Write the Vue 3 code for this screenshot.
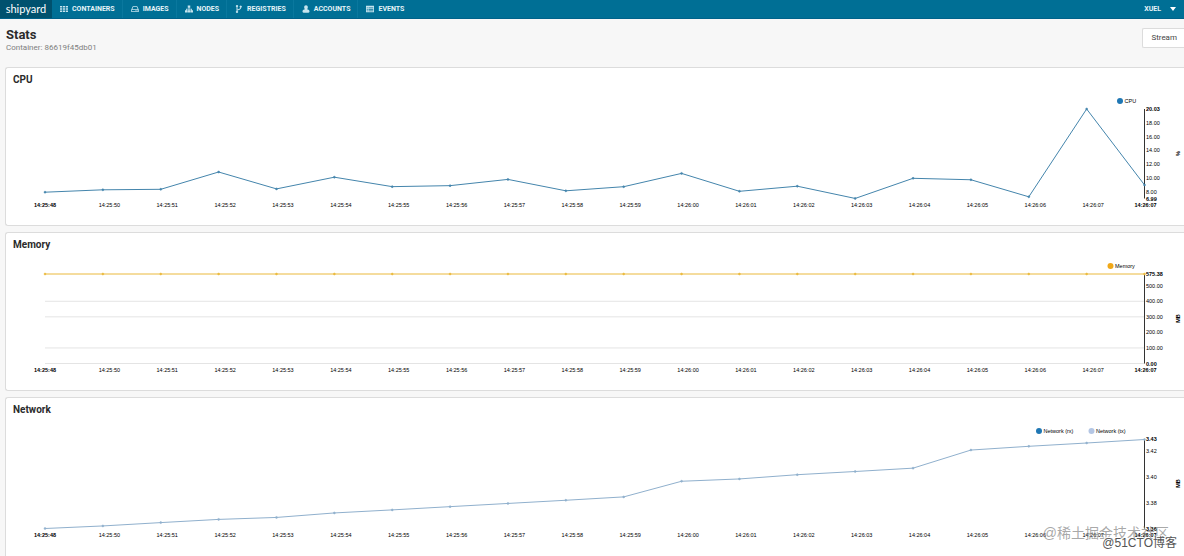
<script setup>
const STEP = 115.74
const LEFT = 78
const RIGHT = 2277
const TOP = 34
const BOTTOM = 213

const nav = [
  { label: 'Containers', icon: 'grid' },
  { label: 'Images', icon: 'disk' },
  { label: 'Nodes', icon: 'tree' },
  { label: 'Registries', icon: 'fork' },
  { label: 'Accounts', icon: 'user' },
  { label: 'Events', icon: 'list' },
]

const times = []
for (let s = 50; s <= 67; s++) {
  times.push(s < 60 ? `14:25:${s}` : `14:26:0${s - 60}`)
}

const charts = [
  {
    title: 'CPU',
    unit: '%',
    min: 6.99,
    max: 20.03,
    ticks: [18, 16, 14, 12, 10, 8],
    grid: [],
    legend: [{ label: 'CPU', color: '#1f77b4', x: 2228 }],
    series: [
      {
        color: '#4485ac',
        values: [7.91, 8.26, 8.33, 10.85, 8.39, 10.09, 8.72, 8.86, 9.77, 8.11, 8.71, 10.65, 8.04, 8.78, 7.0, 9.93, 9.72, 7.24, 20.03, 8.96],
      },
    ],
  },
  {
    title: 'Memory',
    unit: 'MB',
    min: 0,
    max: 575.38,
    ticks: [500, 400, 300, 200, 100],
    grid: [400, 300, 100, 0],
    legend: [{ label: 'Memory', color: '#f0a818', x: 2209 }],
    series: [{ color: '#eab93c', values: Array(20).fill(575.3) }],
  },
  {
    title: 'Network',
    unit: 'MB',
    min: 3.3598,
    max: 3.4295,
    ticks: [3.42, 3.4, 3.38],
    grid: [],
    legend: [
      { label: 'Network (rx)', color: '#1f77b4', x: 2066 },
      { label: 'Network (tx)', color: '#b4c6e4', x: 2171 },
    ],
    series: [
      {
        color: '#90b0cd',
        values: [3.3598, 3.3618, 3.3644, 3.3669, 3.3684, 3.3719, 3.3743, 3.3768, 3.3793, 3.3818, 3.3844, 3.3966, 3.3984, 3.4017, 3.4042, 3.4068, 3.4209, 3.4238, 3.4264, 3.4291],
      },
    ],
  },
]

const px = (i) => LEFT + i * STEP
const py = (c, v) => BOTTOM - ((v - c.min) / (c.max - c.min)) * (BOTTOM - TOP)
const line = (c, s) => s.values.map((v, i) => `${px(i).toFixed(1)},${py(c, v).toFixed(1)}`).join(' ')
</script>

<template>
  <div class="page">
    <header class="bar">
      <a href="#" class="brand" aria-label="shipyard"><span>shipyard</span></a>
      <nav class="menu">
        <a v-for="n in nav" :key="n.label" href="#" class="item">
          <svg class="icon" viewBox="0 0 16 16" aria-hidden="true">
            <path v-if="n.icon === 'grid'" d="M0 2h4.4v3.2H0zM5.8 2h4.4v3.2H5.8zM11.6 2H16v3.2h-4.4zM0 6.4h4.4v3.2H0zM5.8 6.4h4.4v3.2H5.8zM11.6 6.4H16v3.2h-4.4zM0 10.8h4.4V14H0zM5.8 10.8h4.4V14H5.8zM11.6 10.8H16V14h-4.4z" />
            <path v-else-if="n.icon === 'disk'" fill-rule="evenodd" d="M3.6 2.5h8.8L15.5 9v5H.5V9zM4.6 4.1L2.6 8.4h10.8l-2-4.3zM2 9.9v2.6h12V9.9zM9 10.6h1.5v1.2H9zM11.5 10.6H13v1.2h-1.5z" />
            <path v-else-if="n.icon === 'tree'" d="M5.500 1h5v4.500H8.800v1.800H14v3h2V15h-5v-4.700h1.500V8.800H8.800v1.500h1.700V15h-5v-4.700h1.700V8.800H3.500v1.500H5V15H0v-4.700h2v-3h5.200V5.500H5.500z" />
            <path v-else-if="n.icon === 'fork'" fill-rule="evenodd" d="M4 0a2.200 2.200 0 0 1 1 4.200v4.600l3.500-1.300c1.500-.6 1.900-1.300 2-2.300a2.200 2.200 0 1 1 1.900 0c-.1 2-1 3.300-3.200 4.100L5 10.900v.9A2.200 2.200 0 1 1 3 11.800V4.200A2.200 2.200 0 0 1 4 0z" />
            <path v-else-if="n.icon === 'user'" d="M8 .5c2.200 0 3.700 1.700 3.700 4.100 0 1.800-.7 3.300-1.700 4.100 3 .5 5 1.700 5 4.300 0 1.500-.8 2.300-2 2.300H3c-1.200 0-2-.8-2-2.300 0-2.600 2-3.800 5-4.300-1-.8-1.700-2.300-1.700-4.100C4.300 2.200 5.800.5 8 .5z" />
            <path v-else fill-rule="evenodd" d="M0 1.500h16v13H0zM1.500 5v1.500h2V5zM5 5v1.500h9.500V5zM1.500 8v1.500h2V8zM5 8v1.500h9.500V8zM1.500 11v1.500h2V11zM5 11v1.500h9.500V11z" />
          </svg>
          {{ n.label }}
        </a>
      </nav>
      <button type="button" class="account">
        XUEL
        <svg viewBox="0 0 6 4" aria-hidden="true"><path d="M0 0h6L3 4z" /></svg>
      </button>
    </header>

    <main>
      <div class="heading">
        <div>
          <h1>Stats</h1>
          <p>Container: 86619f45db01</p>
        </div>
        <button type="button" class="stream">Stream</button>
      </div>

      <section v-for="c in charts" :key="c.title" class="panel">
        <h2>{{ c.title }}</h2>
        <svg class="chart" viewBox="0 0 2356 266" role="img" :aria-label="c.title + ' chart'">
          <line v-for="g in c.grid" :key="g" class="grid" :x1="LEFT" :x2="RIGHT" :y1="py(c, g)" :y2="py(c, g)" />
          <line class="axis" :x1="RIGHT" :x2="RIGHT" :y1="TOP" :y2="BOTTOM" />
          <g v-for="s in c.series" :key="s.color" :fill="s.color" :stroke="s.color">
            <polyline class="curve" :points="line(c, s)" />
            <circle v-for="(v, i) in s.values" :key="i" :cx="px(i)" :cy="py(c, v)" r="2" />
          </g>
          <g v-for="l in c.legend" :key="l.label">
            <circle :cx="l.x" cy="18" r="6" :fill="l.color" />
            <text :x="l.x + 9" y="22">{{ l.label }}</text>
          </g>
          <text class="strong" :x="RIGHT + 3" :y="TOP + 4">{{ c.max.toFixed(2) }}</text>
          <text v-for="t in c.ticks" :key="t" :x="RIGHT + 3" :y="py(c, t) + 4">{{ t.toFixed(2) }}</text>
          <text class="strong" :x="RIGHT + 3" :y="BOTTOM + 4">{{ c.min.toFixed(2) }}</text>
          <text class="strong mid" :x="LEFT" y="229">14:25:48</text>
          <text v-for="(t, i) in times" :key="t" class="mid" :x="px(i + 1) + 13" y="229">{{ t }}</text>
          <text class="strong mid" :x="RIGHT + 2" y="229">14:26:07</text>
          <text class="strong mid" transform="translate(2348 123) rotate(-90)">{{ c.unit }}</text>
        </svg>
      </section>
    </main>

    <div class="mark community">@稀土掘金技术社区</div>
    <div class="mark blog">@51CTO博客</div>
  </div>
</template>

<style>
html,
body {
  margin: 0;
  height: 100%;
  overflow: hidden;
  background: #f7f7f7;
}
</style>

<style scoped>
.page {
  position: relative;
  height: 100vh;
  overflow: hidden;
  background: #f7f7f7;
  color: #2b2b2b;
  font-family: Roboto, "Liberation Sans", sans-serif;
}
.bar {
  display: flex;
  height: 19px;
  background: #006f95;
  border-bottom: 1px solid #00628a;
  box-sizing: border-box;
}
.brand {
  display: flex;
  align-items: center;
  justify-content: center;
  width: 52px;
  background: #00516e;
  color: #fff;
  font-family: Lato, sans-serif;
  font-size: 11px;
  line-height: 18px;
  text-decoration: none;
}
.menu {
  display: flex;
  flex: 1;
}
.item {
  display: flex;
  align-items: center;
  gap: 4px;
  padding: 0 7px 0 8px;
  border-right: 1px solid #0a789e;
  color: #e6f4f8;
  font-size: 7px;
  font-weight: 700;
  line-height: 18px;
  text-decoration: none;
  text-transform: uppercase;
}
.item:last-child {
  border-right: 0;
}
.icon {
  width: 8px;
  height: 8px;
  fill: #c5e4ee;
}
.account {
  display: flex;
  align-items: center;
  gap: 9px;
  padding: 0 8px;
  border: 0;
  background: none;
  color: #e6f4f8;
  font: 700 7px/18px Roboto, sans-serif;
}
.account svg {
  width: 6px;
  height: 4px;
  fill: #fff;
}
main {
  padding-left: 5px;
}
.heading {
  display: flex;
  justify-content: space-between;
  align-items: flex-start;
  height: 48px;
  padding-left: 1px;
}
h1 {
  margin: 8px 0 0;
  font-size: 13px;
  line-height: 15px;
}
p {
  margin: 0;
  color: #808080;
  font-size: 8px;
  line-height: 12px;
}
.stream {
  margin-top: 9px;
  height: 20px;
  padding: 0 7px 0 8px;
  border: 1px solid #dcdcdc;
  border-right: 0;
  border-radius: 2px 0 0 2px;
  background: #fff;
  color: #444;
  font: 8px/18px Roboto, sans-serif;
}
.panel {
  margin-bottom: 6px;
  border: 1px solid #dcdcdc;
  border-right: 0;
  border-radius: 3px 0 0 3px;
  background: #fff;
}
.panel:last-child {
  padding-bottom: 6px;
}
h2 {
  margin: 0;
  padding-left: 7px;
  font-size: 10px;
  line-height: 24px;
}
.chart {
  display: block;
  width: 100%;
  height: auto;
  font-family: "Liberation Sans", Arial, sans-serif;
  font-size: 11px;
}
.chart text {
  fill: #000;
}
.chart .strong {
  font-weight: 700;
}
.chart .mid {
  text-anchor: middle;
}
.grid {
  stroke: #e4e4e4;
  stroke-width: 2;
}
.axis {
  stroke: #333;
  stroke-width: 2;
}
.curve {
  fill: none;
  stroke-width: 2;
}
.mark {
  position: absolute;
  white-space: nowrap;
  font-family: "Liberation Sans", "Noto Sans CJK SC", sans-serif;
}
.community {
  right: 15px;
  bottom: 13px;
  color: rgba(130, 130, 130, 0.7);
  font-size: 14px;
  line-height: 20px;
}
.blog {
  right: 7px;
  bottom: 4px;
  color: #555;
  font-size: 12px;
  line-height: 18px;
  text-shadow: 1px 1px 0 #fff, -1px -1px 0 #fff;
}
</style>
